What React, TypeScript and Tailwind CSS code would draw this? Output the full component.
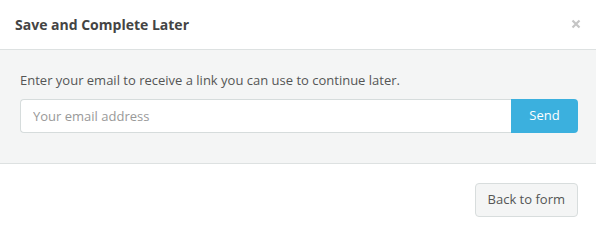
import React from "react";

export default function App() {
  return (
    <div className="w-[596px] h-[237px] bg-white flex flex-col text-[#555] overflow-hidden" style={{ fontFamily: '"Open Sans", sans-serif' }}>
      <div className="h-[50px] shrink-0 border-b border-[#dde1e1] flex items-center justify-between pl-[15px] pr-[15px]">
        <h4 className="text-[14px] font-bold text-[#444] leading-5">Save and Complete Later</h4>
        <button className="text-[#c5c5c5] leading-none -mt-[2px]" aria-label="Close">
          <svg width="10" height="10" viewBox="0 0 10 10">
            <path d="M1.5 1.5 L8.5 8.5 M8.5 1.5 L1.5 8.5" stroke="currentColor" strokeWidth="2.2" strokeLinecap="butt" />
          </svg>
        </button>
      </div>
      <div className="bg-[#f4f5f5] border-b border-[#dde1e1] pl-5 pr-[18px] pt-5 pb-5 shrink-0">
        <p className="text-[13px] leading-5 mb-[9px]">Enter your email to receive a link you can use to continue later.</p>
        <div className="flex h-[34px] mb-[10px]">
          <input
            className="flex-1 min-w-0 h-full bg-white border border-[#d6dcdc] border-r-0 rounded-l-[4px] px-3 text-[13px] text-[#555] placeholder:text-[#999] outline-none"
            placeholder="Your email address"
            style={{ fontFamily: '"Open Sans", sans-serif' }}
          />
          <button className="w-[67px] h-full bg-[#3bb0de] text-white text-[13px] rounded-r-[4px]">Send</button>
        </div>
      </div>
      <div className="flex-1 flex justify-end items-start px-[18px] pt-[19px]">
        <button className="h-[34px] px-3 bg-[#f4f5f5] border border-[#d8dddd] rounded-[4px] text-[13px] text-[#555]">Back to form</button>
      </div>
    </div>
  );
}
